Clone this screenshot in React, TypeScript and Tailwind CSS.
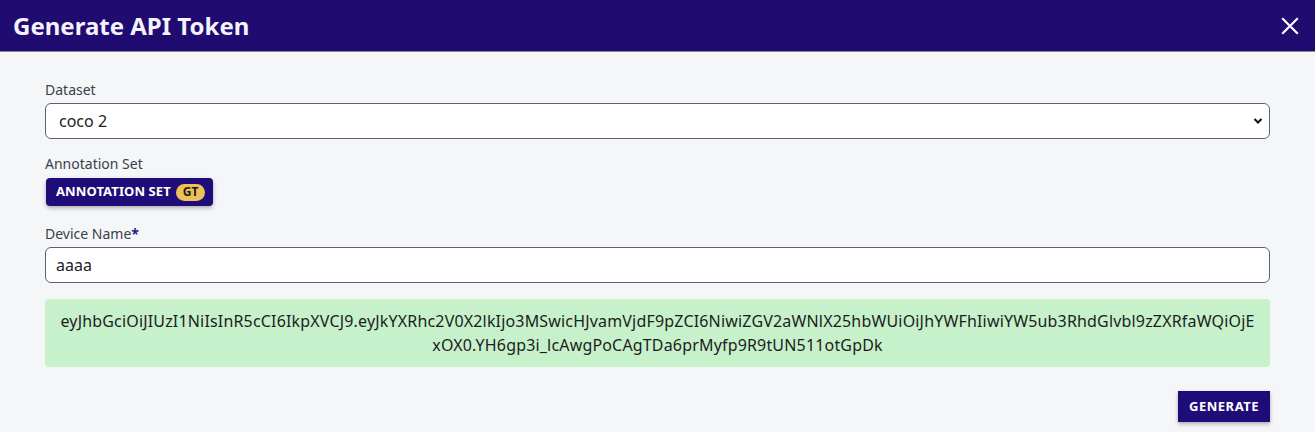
import React from 'react';

const token =
  'eyJhbGciOiJIUzI1NiIsInR5cCI6IkpXVCJ9.eyJkYXRhc2V0X2lkIjo3MSwicHJvamVjdF9pZCI6NiwiZGV2aWNlX25hbWUiOiJhYWFhIiwiYW5ub3RhdGlvbl9zZXRfaWQiOjExOX0.YH6gp3i_lcAwgPoCAgTDa6prMyfp9R9tUN511otGpDk';

export default function App() {
  return (
    <div className="w-[1315px] h-[432px] bg-[#f5f6f8] overflow-hidden" style={{ fontFamily: '"Noto Sans", "Open Sans", sans-serif' }}>
      <div className="h-[52px] bg-[#200c70] border-b border-[#8c8c96] flex items-center justify-between pl-[13px] pr-[16px]">
        <h2 className="text-[#f4f2fa] text-[24px] font-bold">Generate API Token</h2>
        <button className="text-white">
          <svg width="18" height="18" viewBox="0 0 18 18" fill="none" stroke="currentColor" strokeWidth="2.2" strokeLinecap="square">
            <path d="M2 2L16 16M16 2L2 16" />
          </svg>
        </button>
      </div>

      <div className="px-[45px] pt-[28px] flex flex-col">
        <label className="text-[14px] text-[#3a3f4b] leading-[20px] mb-[3px]">Dataset</label>
        <div className="relative h-[36px] bg-white border border-[#5b6275] rounded-[6px] flex items-center pl-[13px]">
          <span className="text-[16px] text-[#222]">coco 2</span>
          <svg className="absolute right-[6px] top-[13px]" width="10" height="8" viewBox="0 0 10 8" fill="none" stroke="#111" strokeWidth="2">
            <path d="M1.5 2l3.5 3.5L8.5 2" />
          </svg>
        </div>

        <label className="text-[14px] text-[#3a3f4b] leading-[20px] mt-[15px] mb-[4px]">Annotation Set</label>
        <div className="flex pl-[1px]">
          <div className="h-[28px] bg-[#200c78] rounded-[4px] shadow-[0_2px_4px_rgba(0,0,0,0.3)] flex items-center pl-[10px] pr-[8px] gap-[5px]">
            <span className="text-white text-[13px] font-bold tracking-[0.1px]">ANNOTATION SET</span>
            <span className="bg-[#eec055] text-[#1a1a1a] text-[12px] font-bold rounded-full px-[7px] h-[17px] flex items-center">GT</span>
          </div>
        </div>

        <label className="text-[14px] text-[#3a3f4b] leading-[20px] mt-[18px] mb-[3px]">
          Device Name<span className="text-[#2b1a8c] font-bold">*</span>
        </label>
        <div className="h-[36px] bg-white border border-[#5b6275] rounded-[6px] flex items-center pl-[10px]">
          <span className="text-[16px] text-[#222]">aaaa</span>
        </div>

        <div className="mt-[16px] bg-[#c6f1cb] rounded-[4px] px-[14px] py-[10px] text-center text-[16px] leading-[24px] tracking-[0.17px] text-[#1d1d1d] break-all">
          {token}
        </div>

        <div className="flex justify-end mt-[24px]">
          <button className="h-[31px] px-[11px] bg-[#200c78] text-white text-[13px] font-bold tracking-[0.5px] shadow-[0_2px_4px_rgba(0,0,0,0.3)]">
            GENERATE
          </button>
        </div>
      </div>
    </div>
  );
}
